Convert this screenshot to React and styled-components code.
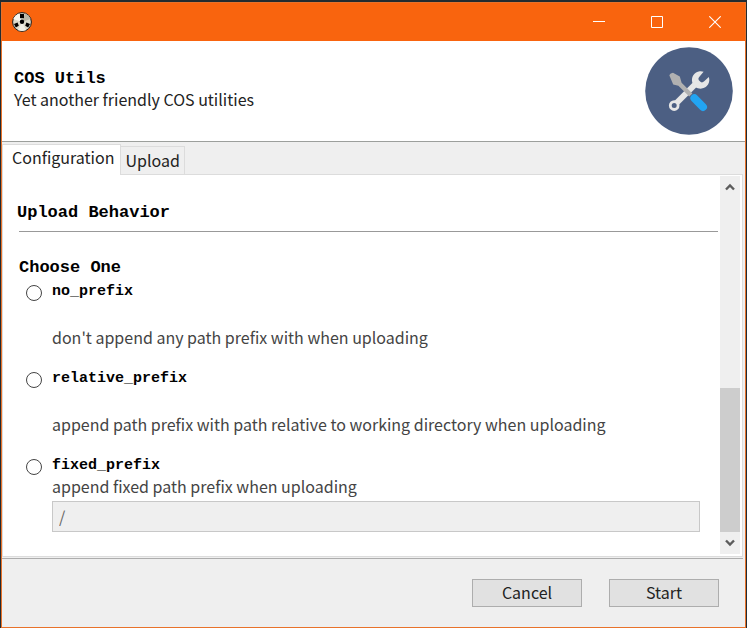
import React, { useState } from "react";
import styled, { createGlobalStyle } from "styled-components";

const behaviors = [
  {
    id: "no_prefix",
    text: "don't append any path prefix with when uploading",
  },
  {
    id: "relative_prefix",
    text: "append path prefix with path relative to working directory when uploading",
  },
  {
    id: "fixed_prefix",
    text: "append fixed path prefix when uploading",
    input: true,
  },
];

const ReelIcon = () => (
  <svg width="20" height="20" viewBox="0 0 20 20" aria-hidden="true">
    <circle cx="10" cy="10" r="9.4" fill="#dddbcb" stroke="#1c1c1c" />
    <path d="M10 10L1.4 7A9 9 0 0 1 7.4 1.6Z" fill="#f8f7f1" />
    <path d="M10 10L6 18A9 9 0 0 0 14 18Z" fill="#f1f0e6" />
    <path d="M10 10L13 1.6A9 9 0 0 1 18.4 7Z" fill="#b9b6a6" />
    <circle cx="10" cy="9.7" r="2.2" fill="#000" />
    <path d="M8 2h4v4.2H8z" fill="#000" />
    <path d="M2 12l3.6-1.4 1.2 3.2-3 1.8z" fill="#000" />
    <path d="M18 12l-3.6-1.4-1.2 3.2 3 1.8z" fill="#000" />
  </svg>
);

const ToolsLogo = () => (
  <svg width="88" height="88" viewBox="0 0 88 88" aria-hidden="true">
    <circle cx="44" cy="44" r="43.8" fill="#4c5f83" />
    <path d="M31 56.5L51 36.5" stroke="#e6e6e6" strokeWidth="6" />
    <circle cx="29.2" cy="58.6" r="3.9" fill="#4c5f83" stroke="#e6e6e6" strokeWidth="2.8" />
    <path
      d="M58.6 24.8A8.7 8.7 0 1 0 63.8 30l-4.6 4.3a3.2 3.2 0 0 1-4.6-.2 3.2 3.2 0 0 1 0-4.6z"
      fill="#e6e6e6"
    />
    <path
      d="M24.4 28.6Q24.6 26.6 28 25.8L34.8 29.6 36.6 35.8 47.4 46.4 44.2 49.6 33.4 38.8 28.2 37.4Z"
      fill="#b1b1b1"
    />
    <path d="M49.4 51.2L58 60" stroke="#22a4f2" strokeWidth="8" strokeLinecap="round" />
  </svg>
);

const Chevron = ({ down }) => (
  <svg width="10" height="8" viewBox="0 0 10 8" aria-hidden="true">
    <path
      d={down ? "M1 1.5L5 5.5L9 1.5" : "M1 6.5L5 2.5L9 6.5"}
      fill="none"
      stroke="#5c5c5c"
      strokeWidth="2.4"
    />
  </svg>
);

const App = () => {
  const [tab, setTab] = useState("Configuration");
  const [behavior, setBehavior] = useState("");
  const [prefix, setPrefix] = useState("/");

  return (
    <Desktop>
      <GlobalStyle />
      <Window>
        <TitleBar>
          <AppIcon>
            <ReelIcon />
          </AppIcon>
          <WindowButton aria-label="Minimize">
            <svg width="12" height="12" viewBox="0 0 12 12">
              <path d="M0 5.5H12" stroke="#fff" />
            </svg>
          </WindowButton>
          <WindowButton aria-label="Maximize">
            <svg width="12" height="12" viewBox="0 0 12 12">
              <path d="M.5 .5H11.5V11.5H.5Z" fill="none" stroke="#fff" />
            </svg>
          </WindowButton>
          <WindowButton aria-label="Close">
            <svg width="12" height="12" viewBox="0 0 12 12">
              <path d="M.3 .3L11.7 11.7M11.7 .3L.3 11.7" stroke="#fff" strokeWidth="1.1" />
            </svg>
          </WindowButton>
        </TitleBar>

        <Header>
          <Titles>
            <Heading as="h1">COS Utils</Heading>
            <Subtitle>Yet another friendly COS utilities</Subtitle>
          </Titles>
          <ToolsLogo />
        </Header>

        <Tabs role="tablist">
          {["Configuration", "Upload"].map((name) => (
            <Tab
              key={name}
              role="tab"
              aria-selected={tab === name}
              $active={tab === name}
              onClick={() => setTab(name)}
            >
              {name}
            </Tab>
          ))}
        </Tabs>

        <Panel>
          <Content>
            <Heading>Upload Behavior</Heading>
            <Group>
              <Legend>Choose One</Legend>
              {behaviors.map((item) => (
                <Option key={item.id}>
                  <Radio
                    type="radio"
                    name="behavior"
                    id={item.id}
                    checked={behavior === item.id}
                    onChange={() => setBehavior(item.id)}
                  />
                  <div>
                    <OptionName htmlFor={item.id}>{item.id}</OptionName>
                    <Description id={item.id + "_text"} $spaced={!item.input}>
                      {item.text}
                    </Description>
                    {item.input && (
                      <PrefixInput
                        aria-labelledby={item.id + "_text"}
                        value={prefix}
                        disabled={behavior !== item.id}
                        onChange={(e) => setPrefix(e.target.value)}
                      />
                    )}
                  </div>
                </Option>
              ))}
            </Group>
          </Content>
          <ScrollBar>
            <ScrollButton aria-label="Scroll up">
              <Chevron />
            </ScrollButton>
            <Track>
              <Thumb />
            </Track>
            <ScrollButton aria-label="Scroll down">
              <Chevron down />
            </ScrollButton>
          </ScrollBar>
        </Panel>

        <Footer>
          <Button>Cancel</Button>
          <Button>Start</Button>
        </Footer>
      </Window>
    </Desktop>
  );
};

export default App;

const GlobalStyle = createGlobalStyle`
  * {
    box-sizing: border-box;
  }
  body {
    margin: 0;
    font-family: "Noto Sans CJK SC", "Noto Sans", sans-serif;
    font-size: 16px;
    line-height: 20px;
    color: #222;
  }
  button, input {
    font: inherit;
    color: inherit;
  }
`;

const Desktop = styled.div`
  display: flex;
  min-height: 100vh;
  padding: 2px 1px 0;
  background: #232b30;
`;
const Window = styled.div`
  flex: 1;
  display: flex;
  flex-direction: column;
  border: 1px solid #e8722a;
  background: #efefef;
`;
const TitleBar = styled.div`
  display: flex;
  height: 38px;
  padding: 0 1px 0 10px;
  background: #f9640e;
`;
const AppIcon = styled.div`
  display: flex;
  align-items: center;
  margin-right: auto;
`;
const WindowButton = styled.button`
  display: flex;
  align-items: center;
  justify-content: center;
  width: 58px;
  padding: 0;
  border: none;
  background: none;
`;
const Header = styled.header`
  display: flex;
  align-items: center;
  justify-content: space-between;
  padding: 6px 12px;
  border-bottom: 1px solid #9c9f9c;
  background: #fff;
`;
const Titles = styled.div`
  padding-bottom: 4px;
`;
const Heading = styled.h2`
  margin: 0;
  font-family: "Liberation Mono", monospace;
  font-size: 17px;
  font-weight: bold;
  line-height: 20px;
  color: #000;
`;
const Subtitle = styled.p`
  margin: 0;
`;
const Tabs = styled.div`
  display: flex;
  align-items: flex-end;
  padding-top: 2px;
`;
const Tab = styled.button`
  height: ${(props) => (props.$active ? 31 : 28)}px;
  margin-bottom: ${(props) => (props.$active ? -1 : 0)}px;
  padding: ${(props) => (props.$active ? "0 6px 6px 9px" : "0 4px 2px")};
  border: 1px solid #dcdcdc;
  border-width: 1px 1px 0 ${(props) => (props.$active ? 1 : 0)}px;
  background: ${(props) => (props.$active ? "#fff" : "#efefef")};
  z-index: ${(props) => (props.$active ? 1 : 0)};
`;
const Panel = styled.div`
  flex: 1;
  display: flex;
  padding: 1px 2px 2px 0;
  margin-right: 2px;
  border: 1px solid #dcdcdc;
  background: #fff;
`;
const Content = styled.div`
  flex: 1;
  padding: 27px 2px 0 14px;
`;
const Group = styled.fieldset`
  margin: 8px 0 0 2px;
  padding: 26px 18px 0 0;
  border: none;
  border-top: 1px solid #999;
`;
const Legend = styled(Heading).attrs({ as: "legend" })`
  float: left;
  width: 100%;
  padding: 0;
`;
const Option = styled.div`
  clear: both;
  display: grid;
  grid-template-columns: 33px 1fr;
  margin-bottom: 18px;
`;
const Radio = styled.input`
  appearance: none;
  width: 16px;
  height: 16px;
  margin: 7px 0 0 7px;
  border: 1px solid #444;
  border-radius: 50%;
  background: #fff;
  &:checked {
    background: radial-gradient(#222 4px, #fff 5px);
  }
`;
const OptionName = styled.label`
  display: block;
  padding-top: 4px;
  font-family: "Liberation Mono", monospace;
  font-size: 15px;
  font-weight: bold;
  line-height: 20px;
  color: #000;
`;
const Description = styled.p`
  margin: ${(props) => (props.$spaced ? 25 : 0)}px 0 0;
  color: #444;
`;
const PrefixInput = styled.input`
  display: block;
  width: 100%;
  height: 31px;
  margin-top: 5px;
  padding: 0 6px 2px;
  border: 1px solid #c8c8c8;
  background: #efefef;
  color: #666;
`;
const ScrollBar = styled.div`
  display: flex;
  flex-direction: column;
  width: 20px;
  background: #efefef;
`;
const ScrollButton = styled.button`
  display: flex;
  align-items: center;
  justify-content: center;
  height: 22px;
  padding: 0;
  border: none;
  background: none;
`;
const Track = styled.div`
  flex: 1;
  display: flex;
  flex-direction: column;
  justify-content: flex-end;
`;
const Thumb = styled.div`
  height: 43%;
  background: #cdcdcd;
`;
const Footer = styled.footer`
  display: flex;
  justify-content: flex-end;
  gap: 27px;
  margin: 1px 2px 0 0;
  padding: 20px 24px;
  border-top: 1px solid #adadad;
`;
const Button = styled.button`
  width: 110px;
  height: 28px;
  padding: 0 0 2px;
  border: 1px solid #adadad;
  background: #e1e1e1;
`;
